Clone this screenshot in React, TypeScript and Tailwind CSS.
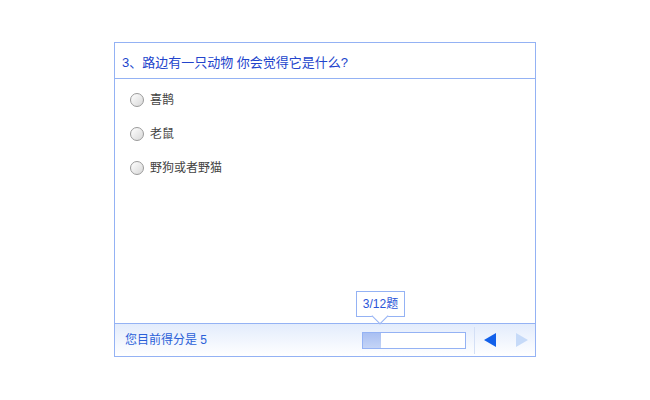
const options = ['喜鹊', '老鼠', '野狗或者野猫']

export default function App() {
  return (
    <div className="w-[650px] h-[400px] bg-white pt-[42px] font-['Liberation_Sans','Noto_Sans_CJK_SC',sans-serif] text-[12px]">
      <div className="mx-auto w-[422px] h-[315px] border border-[#94b2f4] flex flex-col">
        {/* question */}
        <div className="h-[36px] border-b border-[#94b2f4] flex items-center pl-[7px] pt-[5px] text-[13px] text-[#2244cc]">
          3、路边有一只动物 你会觉得它是什么?
        </div>

        {/* options */}
        <div className="flex-1 flex flex-col pt-[14px] pl-[15px] gap-[20px]">
          {options.map(o => (
            <label key={o} className="flex items-center h-[14px] text-[#444]">
              <span className="w-[14px] h-[14px] rounded-full border border-[#9a9a9a] bg-gradient-to-br from-white to-[#d8d8d8]" />
              <span className="ml-[6px]">{o}</span>
            </label>
          ))}
        </div>

        {/* footer */}
        <div className="relative h-[33px] border-t border-[#94b2f4] bg-gradient-to-b from-[#e3ecfc] to-white flex items-center">
          <span className="ml-[10px] text-[#2a5fd8]">您目前得分是 5</span>

          <div className="ml-auto relative w-[104px] h-[17px] border border-[#94b2f4] bg-white">
            <div className="w-[18px] h-full bg-gradient-to-b from-[#a9bff2] to-[#c4d4f6]" />
            {/* tooltip */}
            <div className="absolute left-[-7px] bottom-[31px] w-[49px] h-[26px] border border-[#94b2f4] bg-white flex items-center justify-center text-[#2a55d8]">
              3/12题
              <span className="absolute left-[17px] top-[18px] w-[12px] h-[12px] bg-white border-r border-b border-[#94b2f4] rotate-45" />
            </div>
          </div>

          <div className="ml-[8px] w-px h-[27px] bg-[#d4e0f6]" />
          <div className="flex items-center pl-[8px] pr-[7px] gap-[19px]">
            <svg width="14" height="14" viewBox="0 0 14 14"><polygon points="13,0 13,14 1,7" fill="#1260ea" /></svg>
            <svg width="12" height="14" viewBox="0 0 12 14"><polygon points="0,0 0,14 12,7" fill="#c6daf8" /></svg>
          </div>
        </div>
      </div>
    </div>
  )
}
